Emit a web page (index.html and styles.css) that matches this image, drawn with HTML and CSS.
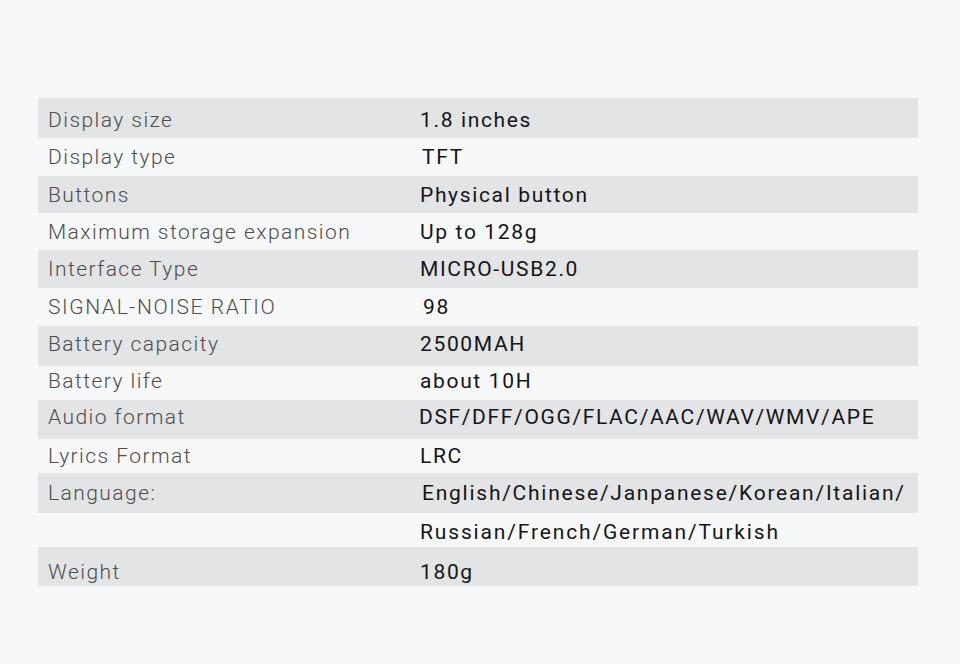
FILE: index.html
```html
<!DOCTYPE html>
<html lang="en">
<head>
<meta charset="utf-8">
<title>Specifications</title>
<link rel="stylesheet" href="styles.css">
</head>
<body>
<main class="page">
  <section class="spec">
    <div class="spec-row shade spec-row--low"><span class="label">Display size</span><span class="value">1.8 inches</span></div>
    <div class="spec-row"><span class="label">Display type</span><span class="value value--in">TFT</span></div>
    <div class="spec-row shade"><span class="label">Buttons</span><span class="value">Physical button</span></div>
    <div class="spec-row"><span class="label">Maximum storage expansion</span><span class="value">Up to 128g</span></div>
    <div class="spec-row shade"><span class="label">Interface Type</span><span class="value">MICRO-USB2.0</span></div>
    <div class="spec-row"><span class="label label--caps">SIGNAL-NOISE RATIO</span><span class="value value--in2">98</span></div>
    <div class="spec-row shade spec-row--high"><span class="label">Battery capacity</span><span class="value">2500MAH</span></div>
    <div class="spec-row spec-row--high"><span class="label">Battery life</span><span class="value">about 10H</span></div>
    <div class="spec-row shade spec-row--high"><span class="label">Audio format</span><span class="value value--out">DSF/DFF/OGG/FLAC/AAC/WAV/WMV/APE</span></div>
    <div class="spec-row"><span class="label">Lyrics Format</span><span class="value">LRC</span></div>
    <div class="spec-row shade"><span class="label">Language:</span><span class="value value--in value--wide">English/Chinese/Janpanese/Korean/Italian/</span></div>
    <div class="spec-row spec-row--low"><span class="label"></span><span class="value value--wider">Russian/French/German/Turkish</span></div>
    <div class="spec-row shade spec-row--bottom"><span class="label">Weight</span><span class="value">180g</span></div>
  </section>
</main>
</body>
</html>
```

FILE: styles.css
```css
html, body {
  margin: 0;
  padding: 0;
}

body {
  background: #f7f8fa;
  font-family: Roboto, "Liberation Sans", Arial, sans-serif;
  width: 960px;
  height: 664px;
  overflow: hidden;
}

.page {
  padding: 98px 42px 0 38px;
}

.spec {
  display: grid;
  grid-template-rows: 40px 38px 37px 37px 38px 38px 40px 34px 39px 34px 40px 34px 39px;
  width: 880px;
}

.spec-row {
  display: grid;
  grid-template-columns: 382px 1fr;
  align-items: center;
  line-height: 24px;
}

.shade {
  background: #e2e4e5;
}

.spec-row--low {
  padding-top: 4px;
}

.spec-row--high {
  padding-bottom: 5px;
}

.spec-row--bottom {
  padding-top: 11px;
}

.label {
  padding-left: 10px;
  font-size: 21px;
  font-weight: 300;
  letter-spacing: 1.45px;
  color: #4d4d4d;
  white-space: nowrap;
}

.label--caps {
  letter-spacing: 1.6px;
}

.value {
  font-size: 21px;
  font-weight: 400;
  letter-spacing: 1.65px;
  color: #151515;
  white-space: nowrap;
}

.value--in {
  padding-left: 2px;
}

.value--in2 {
  padding-left: 3px;
}

.value--out {
  margin-left: -1px;
}

.value--wide {
  letter-spacing: 1.75px;
}

.value--wider {
  letter-spacing: 1.85px;
}
```
